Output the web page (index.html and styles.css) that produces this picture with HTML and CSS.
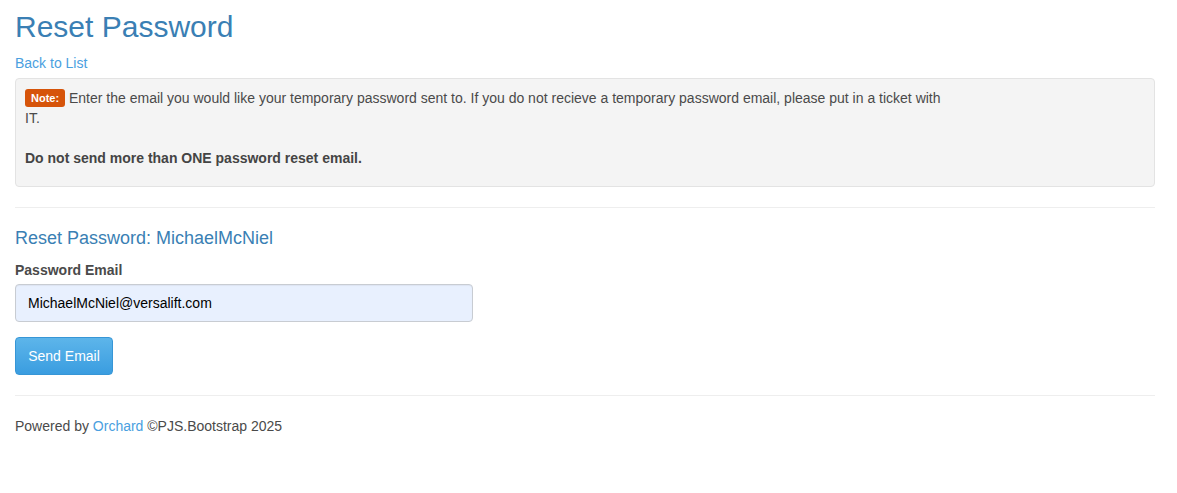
FILE: index.html
```html
<!DOCTYPE html>
<html lang="en">
<head>
<meta charset="utf-8">
<title>Reset Password</title>
<link rel="stylesheet" href="styles.css">
</head>
<body>
<div class="container">
  <h2 class="page-title">Reset Password</h2>
  <p class="back"><a href="#" class="link">Back to List</a></p>
  <div class="well">
    <p class="note"><span class="label">Note:</span> <span class="note-text">Enter the email you would like your temporary password sent to. If you do not recieve a temporary password email, please put in a ticket with IT.</span><br><br><strong>Do not send more than ONE password reset email.</strong></p>
  </div>
  <hr class="rule">
  <h4 class="sub-title">Reset Password: MichaelMcNiel</h4>
  <form class="form">
    <div class="form-group">
      <label class="field-label" for="email">Password Email</label>
      <input class="field-input" id="email" type="text" value="MichaelMcNiel@versalift.com">
    </div>
    <button type="button" class="btn">Send Email</button>
  </form>
  <hr class="rule">
  <footer class="footer">Powered by <a href="#" class="link">Orchard</a> ©PJS.Bootstrap 2025</footer>
</div>
</body>
</html>
```
FILE: styles.css
```css
* { box-sizing: border-box; }
body {
  margin: 0;
  font-family: "Liberation Sans", Arial, sans-serif;
  font-size: 14px;
  line-height: 20px;
  color: #4a4a4a;
  background: #fff;
}
.container {
  width: 1155px;
  padding: 0 0 0 15px;
}
.page-title {
  margin: 10px 0 10px;
  font-size: 30px;
  font-weight: normal;
  line-height: 33px;
  color: #3a7fb4;
}
.back { margin: 0 0 5px; }
.link { color: #4aa0e0; text-decoration: none; }
.well {
  background: #f4f4f4;
  border: 1px solid #e3e3e3;
  border-radius: 4px;
  padding: 9px 9px 8px;
  margin-bottom: 20px;
}
.note {
  margin: 0 0 10px;
  max-width: 920px;
  color: #4a4a4a;
}
.note strong { color: #444; }
.label {
  display: inline-block;
  background: #d6540a;
  color: #fff;
  font-size: 11px;
  font-weight: bold;
  line-height: 14px;
  padding: 2px 6px 2px;
  border-radius: 3px;
  vertical-align: 1px;
}
.rule {
  margin: 20px 0;
  border: 0;
  border-top: 1px solid #eee;
  height: 0;
}
.sub-title {
  margin: 20px 0 12px;
  font-size: 18px;
  font-weight: normal;
  line-height: 20px;
  color: #3a7fb4;
}
.form { margin: 0; }
.form-group { margin-bottom: 15px; }
.field-label {
  display: block;
  font-weight: bold;
  margin: 0 0 4px;
  color: #4a4a4a;
}
.field-input {
  display: block;
  width: 458px;
  height: 38px;
  padding: 6px 12px;
  border: 1px solid #c8ccd2;
  border-radius: 4px;
  background: #e8f0fe;
  font-family: "Liberation Sans", Arial, sans-serif;
  font-size: 14px;
  color: #000;
  box-shadow: inset 0 1px 1px rgba(0,0,0,0.05);
}
.btn {
  display: block;
  height: 38px;
  width: 98px;
  padding: 6px 12px;
  border: 1px solid #3796d6;
  border-radius: 4px;
  background: linear-gradient(#5db5ea, #3a9de0);
  color: #fff;
  font-family: "Liberation Sans", Arial, sans-serif;
  font-size: 14px;
  text-align: center;
}
.footer { color: #4a4a4a; }
```
